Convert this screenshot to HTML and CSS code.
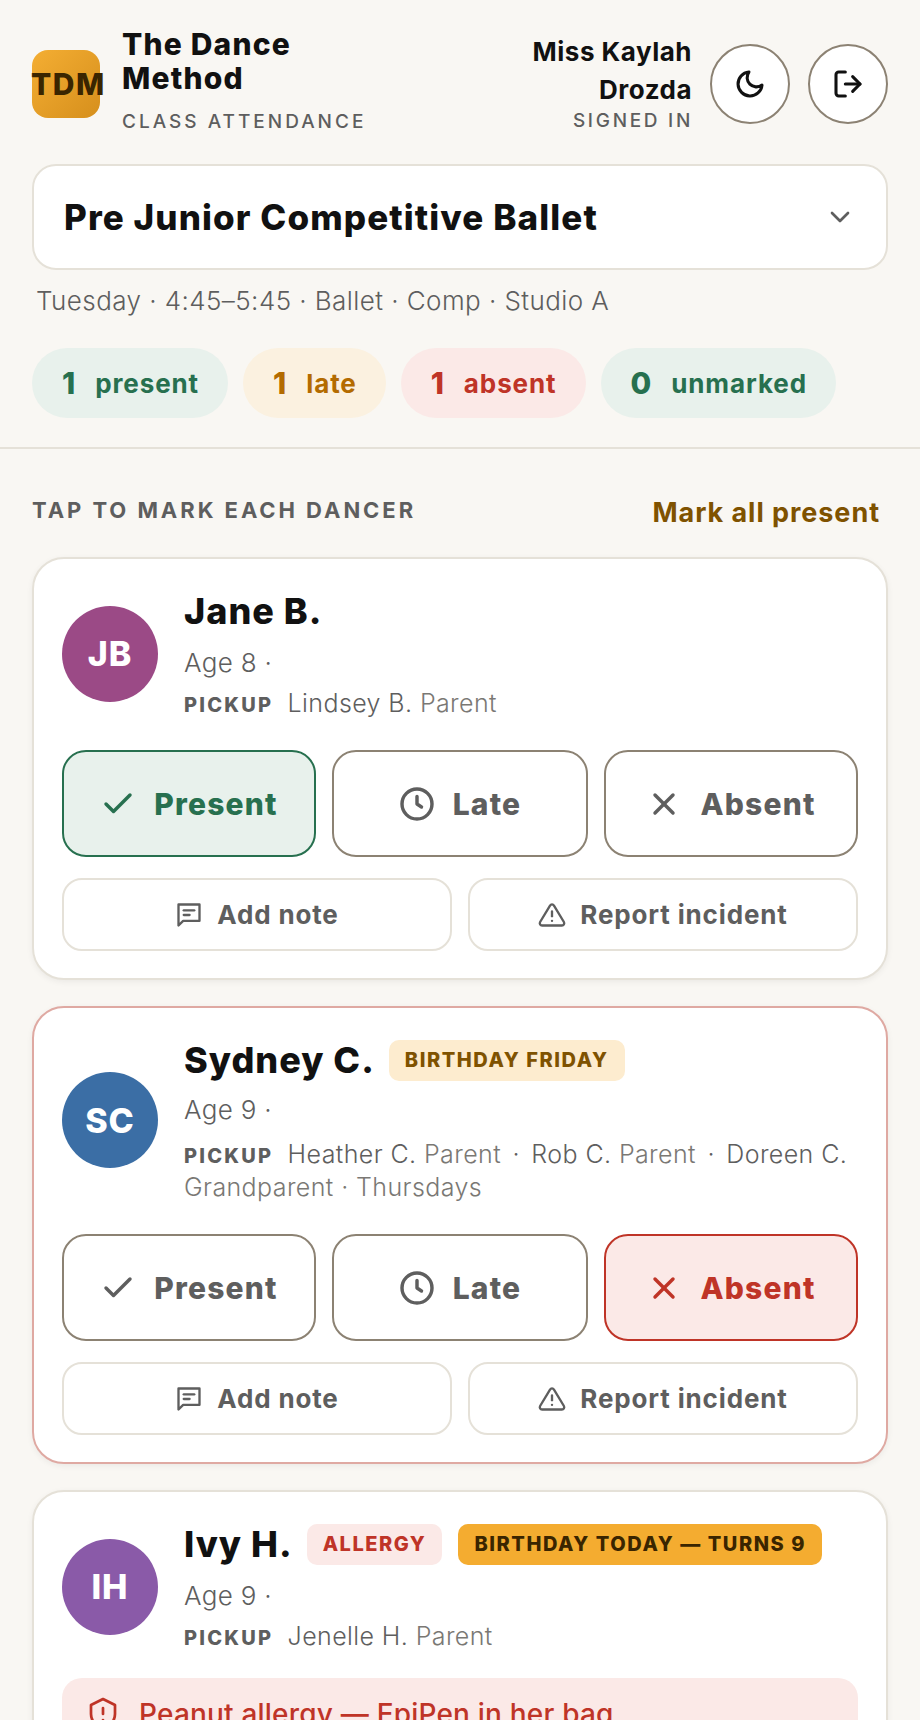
FILE: index.html
```html
<!DOCTYPE html>
<html lang="en">
<head>
  <meta charset="UTF-8">
  <title>The Dance Method - Class Attendance</title>
  <link rel="stylesheet" href="styles.css">
</head>
<body>
  <div class="page">
    <header class="top">
      <div class="logo">TDM</div>
      <div class="brand">
        <h1>The Dance Method</h1>
        <div class="caps">CLASS ATTENDANCE</div>
      </div>
      <div class="user">
        <div class="user-name">Miss Kaylah Drozda</div>
        <div class="caps">SIGNED IN</div>
      </div>
      <button class="round-btn">
        <svg class="icon-32" viewBox="0 0 24 24"><path d="M21 12.79A9 9 0 1 1 11.21 3 7 7 0 0 0 21 12.79z"/></svg>
      </button>
      <button class="round-btn">
        <svg class="icon-32" viewBox="0 0 24 24"><path d="M10 3H5a2 2 0 0 0-2 2v14a2 2 0 0 0 2 2h5"/><path d="M15.5 6.5L21 12l-5.500 5.500"/><path d="M21 12H10"/></svg>
      </button>
    </header>

    <div class="class-select">
      <span>Pre Junior Competitive Ballet</span>
      <svg class="chevron" viewBox="0 0 24 24"><path d="M6 9l6 6 6-6"/></svg>
    </div>
    <p class="class-meta">Tuesday · 4:45–5:45 · Ballet · Comp · Studio A</p>

    <div class="pills">
      <div class="pill pill-green"><b>1</b> present</div>
      <div class="pill pill-amber"><b>1</b> late</div>
      <div class="pill pill-red"><b>1</b> absent</div>
      <div class="pill pill-green"><b>0</b> unmarked</div>
    </div>

    <div class="section-head">
      <h2>TAP TO MARK EACH DANCER</h2>
      <a class="mark-all">Mark all present</a>
    </div>

    <div class="card">
      <div class="dancer">
        <div class="avatar av-jb">JB</div>
        <div class="info">
          <div class="name-row"><span class="name">Jane B.</span></div>
          <div class="age">Age 8 ·</div>
          <div class="pickup"><span class="pickup-label">PICKUP</span> Lindsey B. <i>Parent</i></div>
        </div>
      </div>
      <div class="status-row">
        <button class="status on-present"><svg class="icon-36" viewBox="0 0 24 24"><path d="M20 6L9 17l-5-5"/></svg>Present</button>
        <button class="status"><svg class="icon-36" viewBox="0 0 24 24"><circle cx="12" cy="12" r="10"/><path d="M12 7v5l3 2"/></svg>Late</button>
        <button class="status"><svg class="icon-36" viewBox="0 0 24 24"><path d="M18 6L6 18"/><path d="M6 6l12 12"/></svg>Absent</button>
      </div>
      <div class="action-row">
        <button class="action"><svg class="icon-28" viewBox="0 0 24 24"><path d="M3 3h18v14H7l-4 4z"/><path d="M7.500 8h9"/><path d="M7.500 12h5"/></svg>Add note</button>
        <button class="action"><svg class="icon-28" viewBox="0 0 24 24"><path d="M10.300 3.900L1.800 18a2 2 0 0 0 1.700 3h17a2 2 0 0 0 1.700-3L13.700 3.900a2 2 0 0 0-3.400 0z"/><path d="M12 9v4"/><path d="M12 17h.01"/></svg>Report incident</button>
      </div>
    </div>

    <div class="card card-absent">
      <div class="dancer">
        <div class="avatar av-sc">SC</div>
        <div class="info">
          <div class="name-row"><span class="name">Sydney C.</span><span class="tag tag-bday">BIRTHDAY FRIDAY</span></div>
          <div class="age">Age 9 ·</div>
          <div class="pickup"><span class="pickup-label">PICKUP</span> Heather C. <i>Parent</i> <span class="sep">·</span> Rob C. <i>Parent</i> <span class="sep">·</span> Doreen C. <i>Grandparent · Thursdays</i></div>
        </div>
      </div>
      <div class="status-row">
        <button class="status"><svg class="icon-36" viewBox="0 0 24 24"><path d="M20 6L9 17l-5-5"/></svg>Present</button>
        <button class="status"><svg class="icon-36" viewBox="0 0 24 24"><circle cx="12" cy="12" r="10"/><path d="M12 7v5l3 2"/></svg>Late</button>
        <button class="status on-absent"><svg class="icon-36" viewBox="0 0 24 24"><path d="M18 6L6 18"/><path d="M6 6l12 12"/></svg>Absent</button>
      </div>
      <div class="action-row">
        <button class="action"><svg class="icon-28" viewBox="0 0 24 24"><path d="M3 3h18v14H7l-4 4z"/><path d="M7.500 8h9"/><path d="M7.500 12h5"/></svg>Add note</button>
        <button class="action"><svg class="icon-28" viewBox="0 0 24 24"><path d="M10.300 3.900L1.800 18a2 2 0 0 0 1.700 3h17a2 2 0 0 0 1.700-3L13.700 3.900a2 2 0 0 0-3.400 0z"/><path d="M12 9v4"/><path d="M12 17h.01"/></svg>Report incident</button>
      </div>
    </div>

    <div class="card">
      <div class="dancer">
        <div class="avatar av-ih">IH</div>
        <div class="info">
          <div class="name-row"><span class="name">Ivy H.</span><span class="tag tag-allergy">ALLERGY</span><span class="tag tag-today">BIRTHDAY TODAY — TURNS 9</span></div>
          <div class="age">Age 9 ·</div>
          <div class="pickup"><span class="pickup-label">PICKUP</span> Jenelle H. <i>Parent</i></div>
        </div>
      </div>
      <div class="alert">
        <svg class="icon-36 thin" viewBox="0 0 24 24"><path d="M12 2l8 4v6c0 5-3.500 8-8 10-4.500-2-8-5-8-10V6z"/><path d="M12 8v4"/><path d="M12 16h.01"/></svg>
        Peanut allergy — EpiPen in her bag
      </div>
    </div>
  </div>
</body>
</html>
```

FILE: styles.css
```css
html, body {
  margin: 0;
  height: 1720px;
  overflow: hidden;
}
body {
  font-family: 'Inter', sans-serif;
  background: #f9f7f3;
  color: #111;
}
button {
  font-family: inherit;
}
svg {
  fill: none;
  stroke: currentColor;
  stroke-linecap: round;
  stroke-linejoin: round;
  stroke-width: 2;
  flex-shrink: 0;
}
.page {
  padding: 27px 32px 0;
}

/* header */
.top {
  display: flex;
  align-items: center;
}
.logo {
  width: 68px;
  height: 68px;
  border-radius: 16px;
  background: linear-gradient(135deg, #f4ae33, #d68f1c);
  color: #3a2500;
  font-size: 30px;
  font-weight: 800;
  line-height: 68px;
  white-space: nowrap;
  flex-shrink: 0;
  letter-spacing: 1.5px;
  text-indent: -1px;
  margin-top: 6px;
}
.brand {
  margin-left: 22px;
  width: 262px;
}
h1 {
  margin: 0;
  font-size: 30px;
  line-height: 34px;
  font-weight: 800;
  letter-spacing: 1.2px;
  width: 200px;
}
.caps {
  font-size: 19px;
  font-weight: 500;
  letter-spacing: 3px;
  color: #5e5e5e;
  line-height: 24px;
  margin-top: 15px;
}
.user {
  margin-left: auto;
  margin-top: 5px;
  text-align: right;
  width: 190px;
}
.user-name {
  font-size: 26px;
  line-height: 38px;
  font-weight: 700;
  letter-spacing: 0.5px;
}
.user .caps {
  margin-top: 0;
  margin-right: -1px;
  letter-spacing: 2.7px;
}
.round-btn {
  width: 80px;
  height: 80px;
  border-radius: 50%;
  border: 2px solid #8c8273;
  background: #fff;
  color: #111;
  display: flex;
  align-items: center;
  justify-content: center;
  padding: 0;
  margin-left: 18px;
  margin-top: 6px;
  flex-shrink: 0;
}
.icon-32 { width: 32px; height: 32px; stroke-width: 2.3; }
.icon-36 { width: 36px; height: 36px; stroke-width: 2.3; }
.icon-28 { width: 28px; height: 28px; }
.icon-36.thin { stroke-width: 1.8; }

/* class picker */
.class-select {
  margin-top: 30px;
  height: 106px;
  box-sizing: border-box;
  background: #fff;
  border: 2px solid #e5e1d8;
  border-radius: 24px;
  padding: 0 30px 0 30px;
  display: flex;
  align-items: center;
  justify-content: space-between;
  font-size: 35px;
  font-weight: 800;
  letter-spacing: 1.1px;
}
.chevron {
  width: 32px;
  height: 32px;
  color: #5e5e5e;
}
.class-meta {
  margin: 13px 0 0 4px;
  font-size: 26px;
  line-height: 36px;
  font-weight: 300;
  letter-spacing: 0.43px;
  color: #5e5e5e;
}
.pills {
  display: flex;
  gap: 15px;
  margin-top: 29px;
  padding-bottom: 29px;
  margin-left: -32px;
  margin-right: -32px;
  padding-left: 32px;
  border-bottom: 2px solid #e5e1d8;
}
.pill {
  height: 70px;
  border-radius: 35px;
  padding: 0 29px 0 30px;
  display: flex;
  align-items: center;
  gap: 19px;
  font-size: 26px;
  font-weight: 700;
  letter-spacing: 0.9px;
}
.pill b {
  font-size: 30px;
  font-weight: 800;
}
.pill-green { background: #e8f1ec; color: #27704f; }
.pill-amber { background: #fbf1e0; color: #b36b00; }
.pill-red { background: #fbe9e7; color: #bf3427; }

.section-head {
  display: flex;
  justify-content: space-between;
  align-items: center;
  margin-top: 43px;
  padding-right: 8px;
}
h2 {
  margin: 0 0 4px;
  font-size: 22px;
  font-weight: 700;
  letter-spacing: 2.95px;
  color: #5e5e5e;
}
.mark-all {
  font-size: 27px;
  line-height: 36px;
  font-weight: 700;
  letter-spacing: 0.95px;
  margin: 3px 0 1px;
  color: #7f5200;
}

/* dancer cards */
.card {
  margin-top: 25px;
  background: #fff;
  border: 2px solid #e5e1d8;
  border-radius: 32px;
  padding: 28px 28px 27px;
  box-shadow: 0 2px 6px rgba(0, 0, 0, 0.06);
}
.card + .card {
  margin-top: 26px;
}
.card-absent {
  border-color: #dfa9a2;
}
.dancer {
  display: flex;
  align-items: center;
  gap: 26px;
}
.avatar {
  width: 96px;
  height: 96px;
  border-radius: 50%;
  color: #fff;
  font-size: 34px;
  font-weight: 800;
  letter-spacing: 1px;
  display: flex;
  align-items: center;
  justify-content: center;
  flex-shrink: 0;
}
.av-jb { background: #9b4a86; }
.av-sc { background: #3b6ea5; }
.av-ih { background: #8a5aa8; }
.info {
  flex: 1;
}
.name-row {
  display: flex;
  align-items: center;
  gap: 16px;
  min-height: 48px;
}
.name {
  font-size: 36px;
  font-weight: 800;
  line-height: 48px;
  letter-spacing: 1px;
  margin-right: -2px;
}
.tag {
  border-radius: 10px;
  padding: 0 16px;
  height: 41px;
  line-height: 41px;
  font-size: 20px;
  font-weight: 800;
  letter-spacing: 1.55px;
}
.tag-bday { background: #fdeccf; color: #7f5200; }
.tag-allergy { background: #fbe9e7; color: #bf3427; }
.tag-today { background: #f4ac30; color: #3a2500; }
.age {
  margin-top: 10px;
  font-size: 26px;
  line-height: 36px;
  font-weight: 300;
  letter-spacing: 0.3px;
  color: #5e5e5e;
}
.pickup {
  margin-top: 6px;
  font-size: 25px;
  line-height: 33px;
  font-weight: 300;
  letter-spacing: 0.4px;
  color: #5e5e5e;
}
.card-absent .age {
  margin-top: 8px;
}
.card-absent .pickup {
  margin-top: 10px;
}
.pickup i {
  font-style: normal;
  color: #7a7874;
}
.pickup-label {
  font-size: 20px;
  line-height: 1;
  font-weight: 800;
  letter-spacing: 2.2px;
  margin-right: 7px;
}
.sep {
  margin: 0 4px;
}
.status-row {
  display: grid;
  grid-template-columns: 254px 256px 254px;
  gap: 16px;
  margin-top: 30px;
}
.status {
  height: 107px;
  border-radius: 24px;
  border: 2px solid #8c8273;
  background: #fff;
  color: #5e5e5e;
  font-size: 30px;
  font-weight: 800;
  letter-spacing: 1.2px;
  display: flex;
  align-items: center;
  justify-content: center;
  gap: 18px;
}
.on-present {
  background: #e8f1ec;
  border-color: #27704f;
  color: #27704f;
}
.on-absent {
  background: #fbe9e7;
  border-color: #bf3427;
  color: #bf3427;
}
.action-row {
  display: grid;
  grid-template-columns: 1fr 1fr;
  gap: 16px;
  margin-top: 21px;
}
.action {
  height: 73px;
  border-radius: 20px;
  border: 2px solid #e5e1d8;
  background: #fff;
  color: #5e5e5e;
  font-size: 26px;
  font-weight: 700;
  letter-spacing: 0.85px;
  display: flex;
  align-items: center;
  justify-content: center;
  gap: 14px;
}
.alert {
  margin-top: 25px;
  background: #fbe9e7;
  color: #bf3427;
  border-radius: 20px;
  padding: 18px 23px;
  font-size: 28px;
  font-weight: 500;
  letter-spacing: 0.2px;
  display: flex;
  align-items: center;
  gap: 18px;
}
```
